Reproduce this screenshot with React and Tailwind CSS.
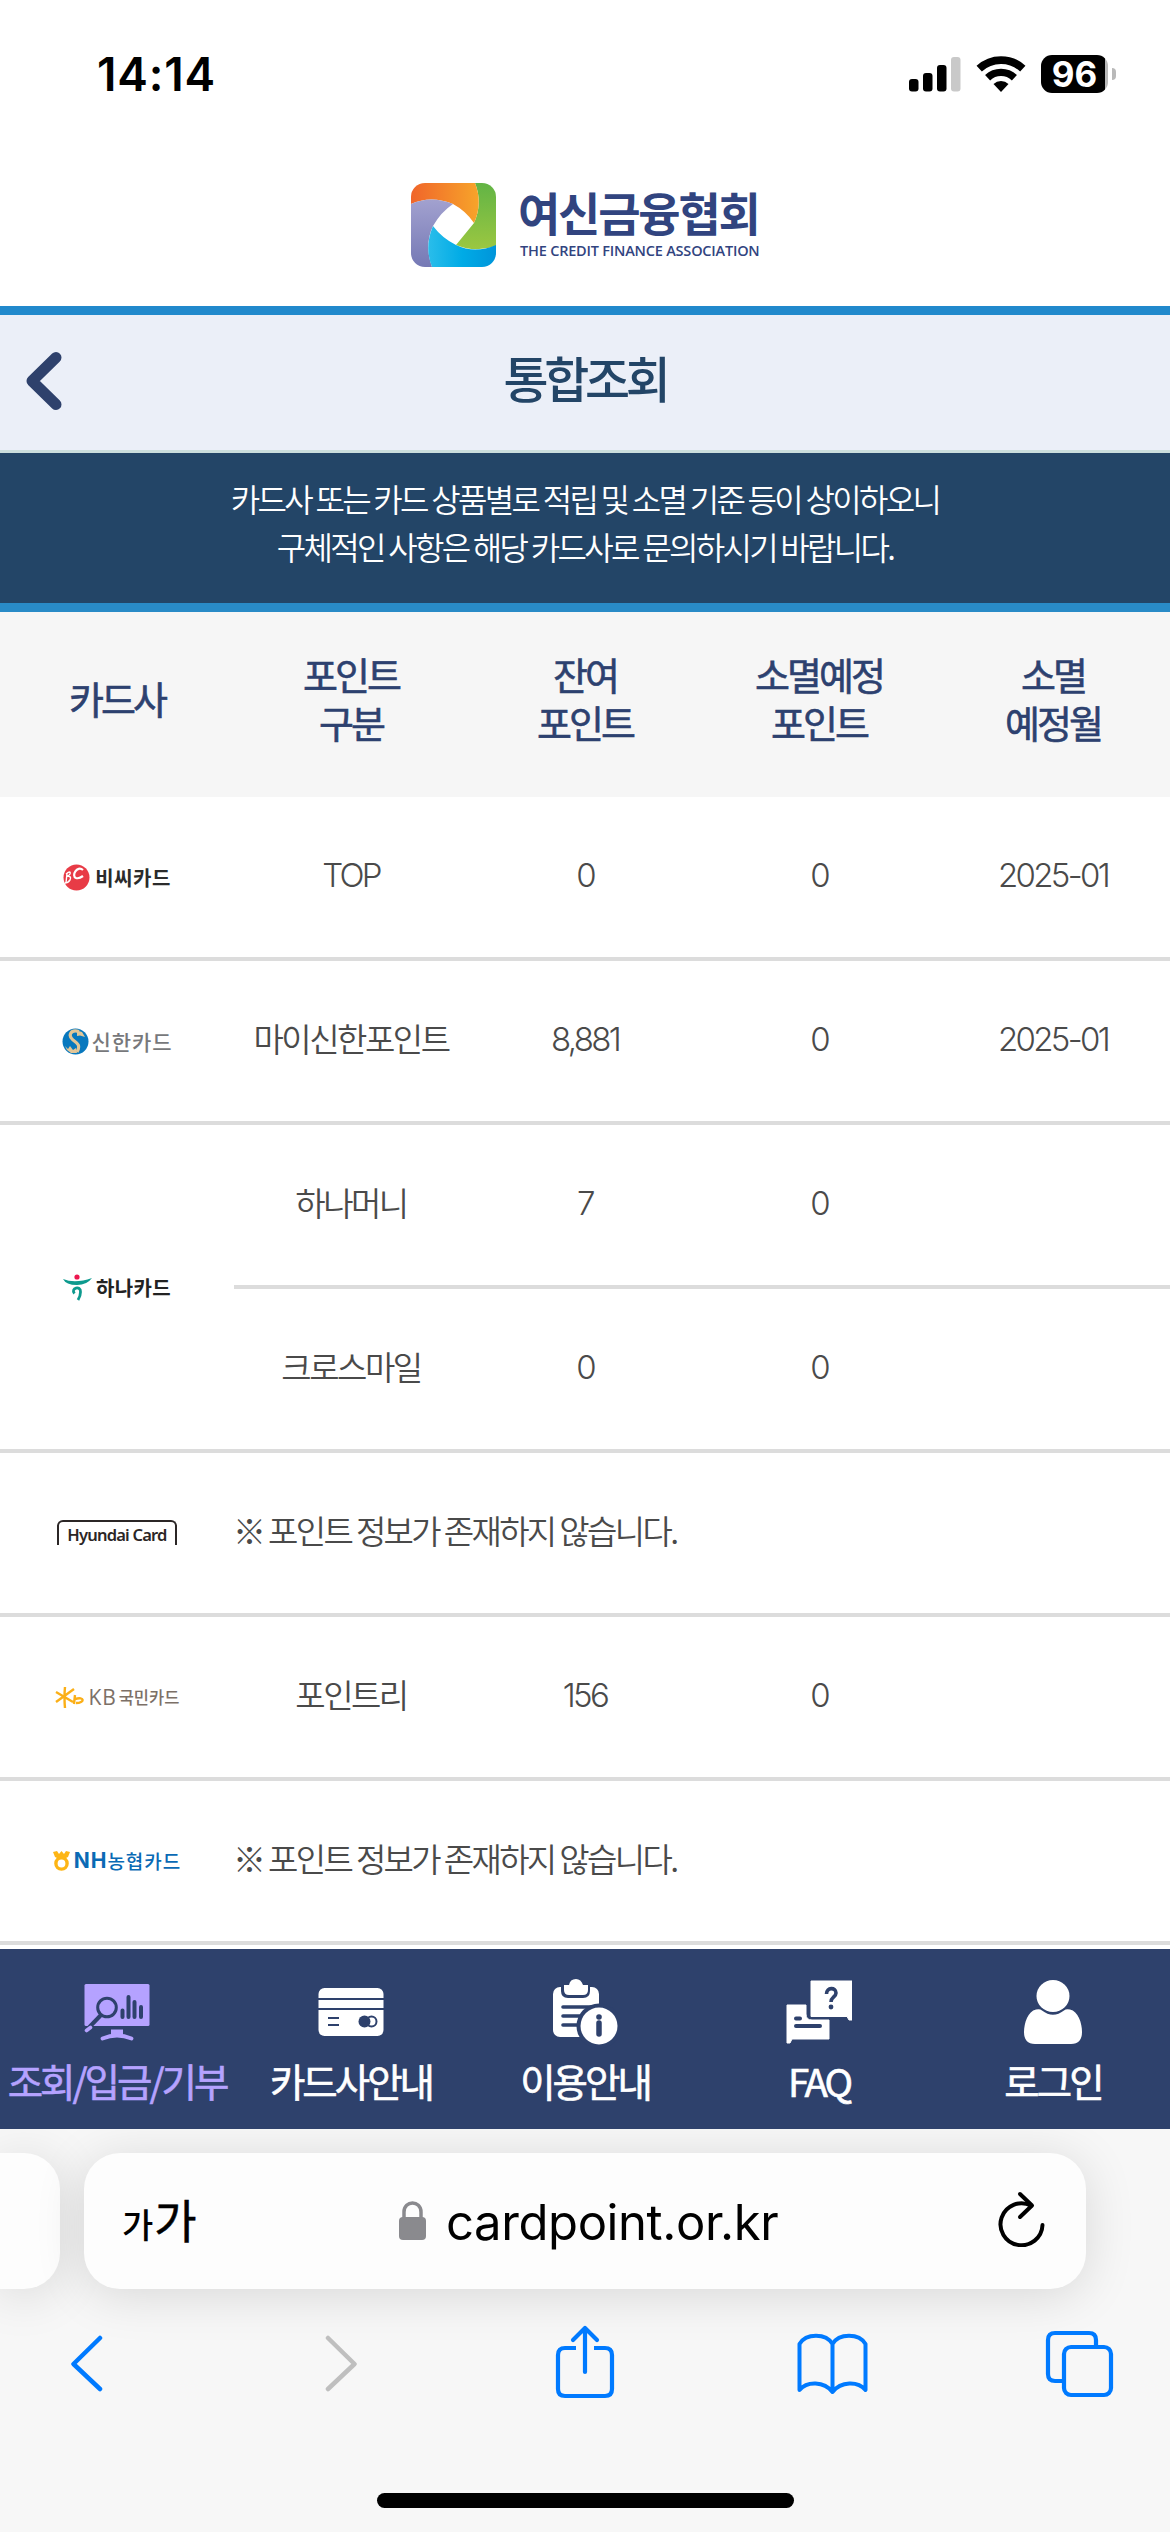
import React from 'react';

const StatusBar = () => (
  <div className="h-[152px] flex justify-between pl-[97px] pr-[54px] pt-[46px] font-['Inter',sans-serif]">
    <span className="text-[46px] leading-[56px] font-semibold tracking-[0.8px] text-black">14:14</span>
    <div className="flex h-[56px] items-center gap-[15px]">
      <svg className="w-[52px] h-[36px]" viewBox="0 0 52 36">
        <rect x="0" y="23" width="9.500" height="12.500" rx="3" />
        <rect x="14" y="17" width="9.500" height="18.500" rx="3" />
        <rect x="28" y="9" width="9.500" height="26.500" rx="3" />
        <rect x="42" y="1" width="9.500" height="34.500" rx="3" fill="#c9c9c9" />
      </svg>
      <svg className="w-[50px] h-[37px]" viewBox="0 0 50 37">
        <path d="M3.200 12.600A32 32 0 0 1 46.800 12.600" fill="none" stroke="#000" strokeWidth="7.800" />
        <path d="M11.600 21.700A19.600 19.600 0 0 1 38.400 21.700" fill="none" stroke="#000" strokeWidth="7.400" />
        <path d="M17.500 28A11 11 0 0 1 32.500 28L25 36Z" />
      </svg>
      <div className="flex items-center gap-[4px]">
        <div className="w-[67px] h-[38px] rounded-[11px] bg-[linear-gradient(90deg,#000_64px,#b9b9b9_64px)] flex items-center justify-center text-white text-[35px] leading-none font-bold">96</div>
        <div className="w-[4px] h-[12px] rounded-r-full bg-[#b9b9b9]" />
      </div>
    </div>
  </div>
);

const AssociationLogo = () => (
  <div className="h-[154px] flex pl-[411px] pt-[31px]">
    <svg className="w-[85px] h-[84px]" viewBox="0 0 85 84">
      <defs>
        <linearGradient id="lgO"><stop offset="0" stopColor="#f0652a" /><stop offset="1" stopColor="#f7a42a" /></linearGradient>
        <linearGradient id="lgG" x2="0" y2="1"><stop offset="0" stopColor="#62b445" /><stop offset="1" stopColor="#9bc741" /></linearGradient>
        <linearGradient id="lgB"><stop offset="0" stopColor="#2abdea" /><stop offset=".5" stopColor="#00abe6" /><stop offset="1" stopColor="#0095da" /></linearGradient>
        <linearGradient id="lgP" x2="0" y2="1"><stop offset="0" stopColor="#a2a1cf" /><stop offset="1" stopColor="#7579b5" /></linearGradient>
        <clipPath id="lgClip"><rect width="85" height="84" rx="14" /></clipPath>
      </defs>
      <g clipPath="url(#lgClip)">
        <rect width="85" height="84" fill="#fff" />
        <path d="M64 0H85V63Q64 70 45 62L63 40Q72 20 64 0Z" fill="url(#lgG)" />
        <path d="M0 0H64Q72 20 63 40Q55 28 42 21Q20 12 0 21Z" fill="url(#lgO)" />
        <path d="M0 21Q20 12 42 21Q30 29 22 43Q13 62 21 84H0Z" fill="url(#lgP)" />
        <path d="M22 43Q31 55 45 62Q64 71 85 62V84H21Q13 64 22 43Z" fill="url(#lgB)" />
      </g>
    </svg>
    <div className="ml-[22px] text-[#31447f]">
      <p className="mt-[1px] text-[46px] leading-[54px] font-bold tracking-[-2.2px] whitespace-nowrap">여신금융협회</p>
      <p className="mt-[4px] ml-[2px] text-[14.500px] leading-[18px] font-semibold tracking-[-0.200px] whitespace-nowrap font-['Open_Sans',sans-serif]">THE CREDIT FINANCE ASSOCIATION</p>
    </div>
  </div>
);

const BcLogo = () => (
  <div className="flex items-center gap-[5px] text-[#2b2b2b]">
    <svg className="w-[27px] h-[27px]" viewBox="0 0 27 27">
      <circle cx="13.500" cy="13.500" r="13" fill="#e83b46" />
      <path d="M20 6C14 1 8 12 13 14Q16 15 20 12" fill="none" stroke="#fff" strokeWidth="2.200" />
      <path d="M3 10Q8 6 7 10Q6 12 4 12Q9 12 7 16Q5 19 2 19M4 9L3 19" fill="none" stroke="#fff" strokeWidth="1.400" />
    </svg>
    <span className="text-[20px] leading-[27px] font-bold tracking-[0.500px]">비씨카드</span>
  </div>
);

const ShinhanLogo = () => (
  <div className="flex items-center gap-[3px] text-[#77787b]">
    <svg className="w-[27px] h-[27px]" viewBox="0 0 27 27">
      <circle cx="13.500" cy="13.500" r="13" fill="#0878be" />
      <path d="M17 3.500C8 1 6 8 11 12C15 15 19 17 15 24" fill="none" stroke="#e3c697" strokeWidth="3.200" />
      <path d="M3 18L6 21L8 18L11 22L14 20L15 25L9 25L5 22Z" fill="#e3c697" />
      <path d="M15 2.500L20 4L23 9L18 7.500L15 8Z" fill="#e3c697" />
    </svg>
    <span className="text-[21px] leading-[27px] font-medium tracking-[0.900px]">신한카드</span>
  </div>
);

const HanaLogo = () => (
  <div className="flex items-center gap-[4px] text-[#222]">
    <svg className="w-[29px] h-[27px]" viewBox="0 0 29 27">
      <circle cx="14" cy="3" r="2.600" fill="#ed174f" />
      <path d="M0 5Q12 10 29 4Q24 11 14 11Q3 11 0 5Z" fill="#0d9a8e" />
      <path d="M11.500 19.500C7 14 18 11 17.500 18Q17.500 22 15 26" fill="none" stroke="#0d9a8e" strokeWidth="2.800" />
    </svg>
    <span className="text-[20px] leading-[27px] font-bold tracking-[0.400px]">하나카드</span>
  </div>
);

const HyundaiLogo = () => (
  <div className="mt-[-1px] w-[120px] h-[25px] border-2 border-b-0 border-[#2b2626] rounded-t-[6px] flex justify-center text-[#2b2626]">
    <span className="text-[16.500px] leading-[25px] font-semibold tracking-[-0.800px] whitespace-nowrap font-['Noto_Sans',sans-serif]">Hyundai Card</span>
  </div>
);

const KbLogo = () => (
  <div className="flex items-center text-[#7c7067]">
    <svg className="w-[29px] h-[21px] mr-[5px]" viewBox="0 0 29 21" fill="none" stroke="#fbaf17" strokeWidth="2.400">
      <path d="M10 0Q9 10 10 21M1 5L18 15M19 2L1 15M20 8L19 17M20 12C30 9 30 16 21 16" />
    </svg>
    <span className="text-[21px] leading-[26px] font-medium tracking-[0.800px] font-['Open_Sans',sans-serif]">KB</span>
    <span className="ml-[2px] text-[16.500px] leading-[26px] font-medium">국민카드</span>
  </div>
);

const NhLogo = () => (
  <div className="flex items-center text-[#0a6ab5]">
    <svg className="w-[17px] h-[20px] mr-[4px]" viewBox="0 0 17 20">
      <circle cx="8.500" cy="12.500" r="5.600" fill="none" stroke="#fdb515" strokeWidth="3.400" />
      <path d="M0 1L4 0L6 3L8.500 0L11 3L13 0L17 1L15 6L11 8H6L2 6Z" fill="#fdb515" />
    </svg>
    <span className="text-[21px] leading-[26px] font-bold tracking-[1px] font-['Inter',sans-serif]">NH</span>
    <span className="text-[19px] leading-[26px] font-medium tracking-[1px]">농협카드</span>
  </div>
);

const CARDS = [
  { logo: BcLogo, points: [['TOP', '0', '0', '2025-01']] },
  { logo: ShinhanLogo, points: [['마이신한포인트', '8,881', '0', '2025-01']] },
  { logo: HanaLogo, points: [['하나머니', '7', '0', ''], ['크로스마일', '0', '0', '']] },
  { logo: HyundaiLogo, points: [] },
  { logo: KbLogo, points: [['포인트리', '156', '0', '']] },
  { logo: NhLogo, points: [] },
];

const HEADERS = [['카드사'], ['포인트', '구분'], ['잔여', '포인트'], ['소멸예정', '포인트'], ['소멸', '예정월']];

const isLatin = (text) => /^[\w,-]+$/.test(text);

const PointTable = () => (
  <div>
    <div className="h-[185px] pb-[13px] grid grid-cols-5 items-center bg-[#f6f6f6] text-center text-[38px] leading-[48px] font-normal [-webkit-text-stroke:0.6px] tracking-[-3px] text-[#2d416f]">
      {HEADERS.map((lines) => (
        <div key={lines.join()}>
          {lines.map((line) => <p key={line}>{line}</p>)}
        </div>
      ))}
    </div>
    {CARDS.map(({ logo: Logo, points }, i) => (
      <div key={i} className="flex border-b-4 border-[#dcdcdc] text-[33px] leading-[48px] font-[350] tracking-[-2.500px] text-[#4a4a4a]">
        <div className="w-[234px] flex items-center justify-center tracking-normal">
          <Logo />
        </div>
        <div className="flex-1 divide-y-4 divide-[#dcdcdc]">
          {points.length === 0 && (
            <p className="h-[160px] pb-[7px] -ml-px flex items-center tracking-[-2.650px]">※ 포인트 정보가 존재하지 않습니다.</p>
          )}
          {points.map((row) => (
            <div key={row[0]} className="h-[153px] pb-[7px] box-content grid grid-cols-4 items-center text-center">
              {row.map((cell, c) => (
                <span key={c} className={isLatin(cell) ? "pt-[3px] font-['Inter',sans-serif] font-light tracking-[-2.7px]" : ''}>{cell}</span>
              ))}
            </div>
          ))}
        </div>
      </div>
    ))}
  </div>
);

const MonitorIcon = () => (
  <svg className="w-[66px] h-[76px]" viewBox="0 0 66 76">
    <rect x="0.500" y="6" width="65" height="42" rx="1.500" fill="#b5a2ff" />
    <circle cx="23" cy="29.500" r="9.300" fill="none" stroke="#2e416c" strokeWidth="3" />
    <path d="M17 37L4.500 50" stroke="#2e416c" strokeWidth="4" />
    <path d="M6.500 49.500L2.500 52.500" stroke="#b5a2ff" strokeWidth="3.600" strokeLinecap="round" />
    <path d="M38.500 32.500V39M44.500 19V39M50.500 24V39M57 29V39" stroke="#2e416c" strokeWidth="4" strokeLinecap="round" />
    <path d="M27 51.500H39V58H27Z" fill="#b5a2ff" />
    <path d="M18.500 60.500Q33 54.500 47.500 60.500" fill="none" stroke="#b5a2ff" strokeWidth="3.800" strokeLinecap="round" />
  </svg>
);

const CardIcon = () => (
  <svg className="w-[66px] h-[76px]" viewBox="0 0 66 76">
    <rect x="0.500" y="10" width="65" height="48" rx="6" fill="#fff" />
    <path d="M0 21H66M0 31H66" stroke="#2e416c" strokeWidth="2" />
    <path d="M10 40H21M10 47H21" stroke="#2e416c" strokeWidth="2.200" />
    <circle cx="46.500" cy="43.500" r="6" fill="#2e416c" />
    <circle cx="53.500" cy="43.500" r="5" fill="none" stroke="#2e416c" strokeWidth="2" />
  </svg>
);

const GuideIcon = () => (
  <svg className="w-[66px] h-[76px]" viewBox="0 0 66 76">
    <rect x="1" y="9" width="46" height="50" rx="7" fill="#fff" />
    <path d="M9 8H38V13Q38 20 31 20H16Q9 20 9 13Z" fill="#2e416c" />
    <path d="M12 7H17Q18 1 24 1Q29 1 31 7H36V12Q36 17 31 17H17Q12 17 12 12Z" fill="#fff" />
    <path d="M11 29H40M11 38H34M11 47H30" stroke="#2e416c" strokeWidth="3.600" strokeLinecap="round" />
    <circle cx="47" cy="48" r="22.500" fill="#2e416c" />
    <circle cx="47" cy="48" r="18.500" fill="#fff" />
    <path d="M47 45V56" stroke="#2e416c" strokeWidth="5.500" strokeLinecap="round" />
    <circle cx="47" cy="39" r="2.800" fill="#2e416c" />
  </svg>
);

const FaqIcon = () => (
  <svg className="w-[66px] h-[76px]" viewBox="0 0 66 76">
    <path d="M1 27H20V36Q20 42 26 42H43V61H6L4 65H1Z" fill="#fff" stroke="#fff" strokeLinejoin="round" />
    <path d="M10 40.500H14M10 48H34" stroke="#2e416c" strokeWidth="4" strokeLinecap="round" />
    <path d="M25 3H66V42H63L61 38.500H25Z" fill="#fff" stroke="#fff" strokeLinejoin="round" />
    <path d="M40.500 16C40.500 9 50 9 50 15C50 19 45 19 45 24" fill="none" stroke="#2e416c" strokeWidth="3.600" />
    <circle cx="45" cy="29" r="2.400" fill="#2e416c" />
  </svg>
);

const UserIcon = () => (
  <svg className="w-[60px] h-[76px]" viewBox="0 0 60 76">
    <ellipse cx="30" cy="18" rx="16.500" ry="16" fill="#fff" />
    <path d="M13 31.500Q17 30.500 19 32.500Q30 41 41 32.500Q43 30.500 47 31.500C55 33 59 45 59 54Q59 66 48 66H12Q1 66 1 54C1 45 5 33 13 31.500Z" fill="#fff" />
  </svg>
);

const NAV = [
  { label: '조회/입금/기부', icon: MonitorIcon, active: true },
  { label: '카드사안내', icon: CardIcon },
  { label: '이용안내', icon: GuideIcon },
  { label: 'FAQ', icon: FaqIcon },
  { label: '로그인', icon: UserIcon },
];

const BottomNav = () => (
  <nav className="mt-1 h-[180px] pt-[29px] grid grid-cols-5 bg-[#2e416c]">
    {NAV.map(({ label, icon: Icon, active }) => (
      <div key={label} className={`flex flex-col items-center ${active ? 'text-[#b5a2ff]' : 'text-white'}`}>
        <Icon />
        <span className="mt-[-2px] text-[38.500px] leading-[56px] font-normal [-webkit-text-stroke:0.6px] tracking-[-3px] whitespace-nowrap">{label}</span>
      </div>
    ))}
  </nav>
);

const BrowserBar = () => (
  <div className="h-[403px] bg-[#f7f7f7] overflow-hidden">
    <div className="pt-6 flex gap-6">
      <div className="w-[60px] h-[136px] rounded-r-[36px] bg-[#fdfdfd] shadow-[0_6px_50px_rgba(0,0,0,0.13)]" />
      <div className="w-[1002px] h-[136px] rounded-[36px] bg-[#fdfdfd] shadow-[0_6px_50px_rgba(0,0,0,0.13)] flex items-center pl-[38px] pr-[41px]">
        <div className="w-[80px] flex items-baseline text-black whitespace-nowrap">
          <span className="text-[34px] leading-[60px] font-medium">가</span>
          <span className="ml-[1px] text-[46px] leading-[60px] font-normal [-webkit-text-stroke:0.5px]">가</span>
        </div>
        <div className="ml-[197px] mt-[3px] flex items-center">
          <svg className="w-[27px] h-[40px] mr-[20px] mb-[4px]" viewBox="0 0 27 40" fill="#8a8a8e">
            <rect y="16" width="27" height="23" rx="4" />
            <path d="M5 18V11C5 -1 22 -1 22 11V18" fill="none" stroke="#8a8a8e" strokeWidth="3.500" />
          </svg>
          <span className="text-[49px] leading-[60px] tracking-[-0.400px] text-black font-['Inter',sans-serif]">cardpoint.or.kr</span>
        </div>
        <svg className="ml-auto mb-[4px] w-[48px] h-[56px]" viewBox="0 0 48 56" fill="none" stroke="#000" strokeWidth="4" strokeLinecap="round" strokeLinejoin="round">
          <path d="M45.500 34A21 21 0 1 1 34 14.500" />
          <path d="M23 3L35 14.500L23 26" />
        </svg>
      </div>
    </div>

    {/* Toolbar */}
    <div className="mt-[35px] pl-[70px] h-[78px] flex items-center text-[#007aff]">
      <svg className="w-[33px] h-[78px]" viewBox="0 0 33 78" fill="none" stroke="currentColor" strokeWidth="4.500" strokeLinecap="round" strokeLinejoin="round">
        <path d="M30 14L3.500 40L30 65" />
      </svg>
      <svg className="ml-[222px] w-[33px] h-[78px] text-[#bfbfbf]" viewBox="0 0 33 78" fill="none" stroke="currentColor" strokeWidth="4.500" strokeLinecap="round" strokeLinejoin="round">
        <path d="M3 14L29.500 40L3 65" />
      </svg>
      <svg className="ml-[197px] w-[60px] h-[78px]" viewBox="0 0 60 78" fill="none" stroke="currentColor" strokeWidth="4.200" strokeLinecap="round" strokeLinejoin="round">
        <path d="M21 24H10Q3 24 3 31V65Q3 72 10 72H50Q57 72 57 65V31Q57 24 50 24H39" strokeLinecap="butt" />
        <path d="M30 48V4M18 16L30 4L42 16" />
      </svg>
      <svg className="ml-[182px] w-[72px] h-[78px]" viewBox="0 0 72 78" fill="none" stroke="currentColor" strokeWidth="4" strokeLinecap="round" strokeLinejoin="round">
        <path d="M35.500 68V20C29 9 9 9 2.500 20V66C10 57 27 57 35.500 68C44 57 61 57 68.500 66V20C62 9 42 9 35.500 20" />
      </svg>
      <svg className="ml-[176px] w-[70px] h-[78px]" viewBox="0 0 70 78" fill="none" stroke="currentColor" strokeWidth="4.200">
        <path d="M18 57H10Q3 57 3 50V16Q3 9 10 9H44Q51 9 51 16V22" />
        <rect x="19" y="23" width="47" height="48" rx="7" />
      </svg>
    </div>

    <div className="mt-[91px] mx-auto w-[417px] h-[15px] rounded-full bg-black" />
  </div>
);

const App = () => (
  <div className="w-[1170px] h-[2532px] overflow-hidden bg-white font-['Noto_Sans_CJK_KR',sans-serif]">
    <StatusBar />
    <AssociationLogo />
    <div className="h-[147px] border-t-[9px] border-t-[#2189cc] border-b-[3px] border-b-[#cbdedd] bg-[#ebeff8] pb-[5px] grid grid-cols-[100px_1fr_100px] items-center">
      <svg className="ml-[24px] w-[42px] h-[62px]" viewBox="0 0 42 62" fill="none" stroke="#2e416c" strokeWidth="11" strokeLinecap="round" strokeLinejoin="round">
        <path d="M32 8.500L8 32L32 55.500" />
      </svg>
      <h1 className="mb-[6px] text-center text-[49px] leading-[60px] font-medium tracking-[-4.300px] text-[#234567]">통합조회</h1>
    </div>
    <div className="h-[159px] pt-[21px] border-b-[9px] border-[#298bc7] bg-[#234567] text-center text-[32px] leading-[48px] font-[350] tracking-[-2.700px] text-white">
      <p>카드사 또는 카드 상품별로 적립 및 소멸 기준 등이 상이하오니</p>
      <p>구체적인 사항은 해당 카드사로 문의하시기 바랍니다.</p>
    </div>
    <PointTable />
    <BottomNav />
    <BrowserBar />
  </div>
);

export default App;
